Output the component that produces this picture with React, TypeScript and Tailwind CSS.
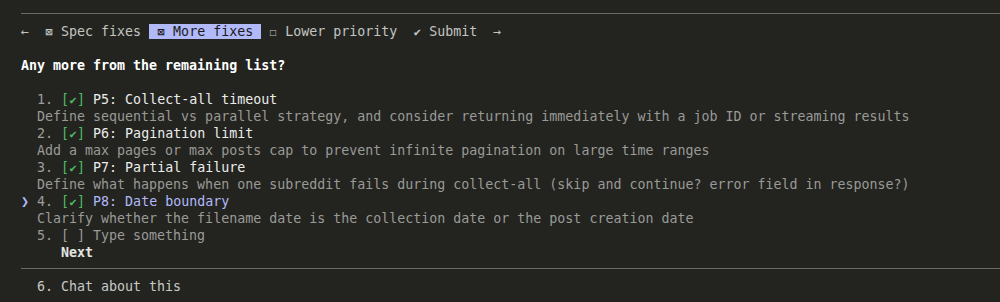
import type { ReactNode } from "react";

const items = [
  {
    n: 1,
    title: "P5: Collect-all timeout",
    desc: "Define sequential vs parallel strategy, and consider returning immediately with a job ID or streaming results",
  },
  {
    n: 2,
    title: "P6: Pagination limit",
    desc: "Add a max pages or max posts cap to prevent infinite pagination on large time ranges",
  },
  {
    n: 3,
    title: "P7: Partial failure",
    desc: "Define what happens when one subreddit fails during collect-all (skip and continue? error field in response?)",
  },
  {
    n: 4,
    title: "P8: Date boundary",
    desc: "Clarify whether the filename date is the collection date or the post creation date",
  },
];

// one terminal cell, so odd glyphs keep the grid
function G({ children, className = "" }: { children: ReactNode; className?: string }) {
  return <span className={`inline-block w-[8px] text-center ${className}`}>{children}</span>;
}

function Row({ children, className = "" }: { children?: ReactNode; className?: string }) {
  return <div className={`h-[17px] whitespace-pre leading-[17px] ${className}`}>{children}</div>;
}

function Rule() {
  return (
    <div className="flex h-[17px] items-center">
      <div className="h-px w-full bg-[#6a6a66]" />
    </div>
  );
}

export default function App() {
  return (
    <div className="min-h-[302px] h-screen bg-[#232420] pl-[21px] pt-[5px] font-['DejaVu_Sans_Mono',monospace] text-[13.3px] text-[#c9c9c6]">
      <Rule />
      <div className="pt-px">
        <Row className="text-[#c4c4c1]">
          <G>←</G>
          {"  "}
          <G className="text-[12px]">⊠</G>
          {" Spec fixes "}
          <span className="bg-[#b1b9f9] text-[#1a1a1a]">
            {" "}
            <G className="text-[12px]">⊠</G>
            {" More fixes "}
          </span>
          {" "}
          <G className="text-[12px]">☐</G>
          {" Lower priority  "}
          <G className="text-[12px]">✔</G>
          {" Submit  "}
          <G>→</G>
        </Row>
        <Row />
        <Row className="font-bold text-white">Any more from the remaining list?</Row>
        <Row />
        {items.map((it) => {
          const active = it.n === 4;
          return (
            <div key={it.n}>
              <Row>
                {active ? <G className="text-[#b1b9f9]">❯</G> : <G> </G>}
                {" "}
                <span className="text-[#9e9e9b]">{it.n}. </span>
                <span className="text-[#4eba65]">
                  [<G className="text-[12px]">✔</G>]
                </span>{" "}
                <span className={active ? "text-[#b1b9f9]" : "text-[#ececea]"}>{it.title}</span>
              </Row>
              <Row className="text-[#9a9a97]">{"  " + it.desc}</Row>
            </div>
          );
        })}
        <Row className="text-[#9a9a97]">{"  5. [ ] Type something"}</Row>
        <Row className="font-bold text-[#e4e4e2]">{"     Next"}</Row>
      </div>
      <div className="-mt-px">
        <Rule />
      </div>
      <div className="pt-px">
        <Row className="text-[#c9c9c6]">{"  6. Chat about this"}</Row>
      </div>
    </div>
  );
}
